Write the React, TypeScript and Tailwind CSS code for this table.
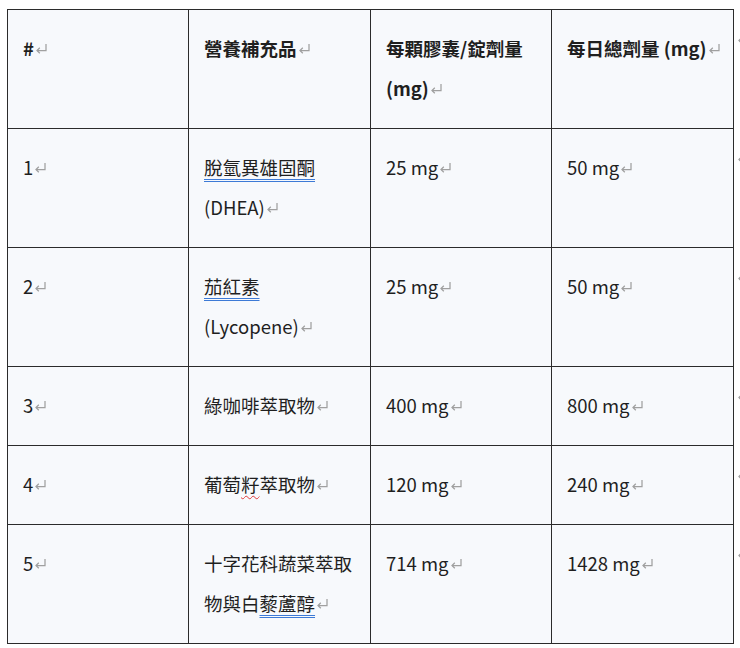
import React from "react";

const Mark = () => (
  <svg
    width="13"
    height="11"
    viewBox="0 0 13 11"
    className="inline-block align-[2px] ml-[1px]"
    fill="none"
    stroke="#a0a0a0"
    strokeWidth="1.25"
  >
    <path d="M11 1 V7.5 H2" />
    <path d="M4.8 4.7 L2 7.5 L4.8 10.3" />
  </svg>
);

const Blue = ({ children }: { children: React.ReactNode }) => (
  <span className="underline decoration-double decoration-[#3d7ad6] underline-offset-[4px] decoration-1">
    {children}
  </span>
);

const Red = ({ children }: { children: React.ReactNode }) => (
  <span className="underline decoration-wavy decoration-[#e03a3a] underline-offset-[3px] decoration-1">
    {children}
  </span>
);

const td =
  "border border-[#2b2b2b] bg-[#f7f9fc] align-top pl-[15px] pr-[10px] pt-[18px] pb-[20px] leading-[40px]";

const rows: React.ReactNode[][] = [
  [
    <>1<Mark /></>,
    <>
      <Blue>脫氫異雄固酮</Blue>
      <br />
      (DHEA)<Mark />
    </>,
    <>25 mg<Mark /></>,
    <>50 mg<Mark /></>,
  ],
  [
    <>2<Mark /></>,
    <>
      <Blue>茄紅素</Blue>
      <br />
      (Lycopene)<Mark />
    </>,
    <>25 mg<Mark /></>,
    <>50 mg<Mark /></>,
  ],
  [
    <>3<Mark /></>,
    <>綠咖啡萃取物<Mark /></>,
    <>400 mg<Mark /></>,
    <>800 mg<Mark /></>,
  ],
  [
    <>4<Mark /></>,
    <>
      葡萄<Red>籽</Red>萃取物<Mark />
    </>,
    <>120 mg<Mark /></>,
    <>240 mg<Mark /></>,
  ],
  [
    <>5<Mark /></>,
    <>
      十字花科蔬菜萃取
      <br />
      物與白<Blue>藜蘆醇</Blue>
      <Mark />
    </>,
    <>714 mg<Mark /></>,
    <>1428 mg<Mark /></>,
  ],
];

const EndCell = () => (
  <td className="align-top pl-[2px] pt-[16px] leading-[24px]">
    <Mark />
  </td>
);

export default function App() {
  return (
    <div
      className="w-[740px] h-[648px] overflow-hidden bg-white pt-[9px] pl-[7px] text-[#1f1f1f] text-[18.5px]"
      style={{ fontFamily: '"Noto Sans CJK TC", "Noto Sans", sans-serif' }}
    >
      <table className="border-collapse table-fixed w-[760px]">
        <colgroup>
          <col className="w-[181px]" />
          <col className="w-[182px]" />
          <col className="w-[181px]" />
          <col className="w-[182px]" />
          <col className="w-[34px]" />
        </colgroup>
        <tbody>
          <tr>
            <td className={td + " font-semibold"}>
              #<Mark />
            </td>
            <td className={td + " font-semibold"}>
              營養補充品<Mark />
            </td>
            <td className={td + " font-semibold"}>
              每顆膠囊/錠劑量
              <br />
              (mg)<Mark />
            </td>
            <td className={td + " font-semibold whitespace-nowrap"}>
              每日總劑量 (mg)<Mark />
            </td>
            <EndCell />
          </tr>
          {rows.map((r, i) => (
            <tr key={i}>
              {r.map((c, j) => (
                <td key={j} className={td}>
                  {c}
                </td>
              ))}
              <EndCell />
            </tr>
          ))}
        </tbody>
      </table>
    </div>
  );
}
